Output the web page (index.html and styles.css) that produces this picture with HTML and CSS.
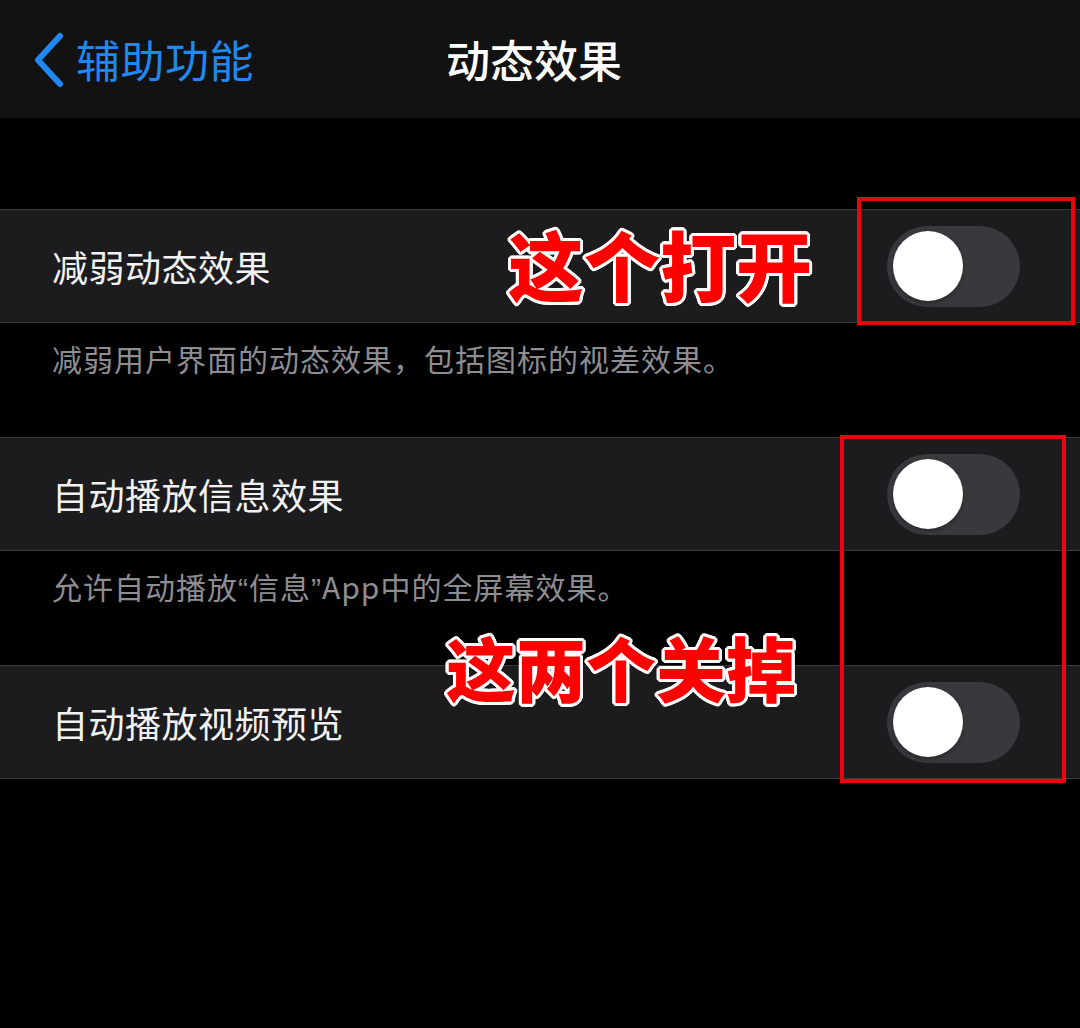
FILE: index.html
```html
<!DOCTYPE html>
<html lang="zh-CN">
<head>
<meta charset="utf-8">
<title>动态效果</title>
<link rel="stylesheet" href="styles.css">
</head>
<body>
<div class="screen">
  <header class="nav">
    <a class="back">
      <svg class="chev" width="34" height="56" viewBox="0 0 34 56"><polyline points="28,4 6,28 28,52" fill="none" stroke="#1f88f2" stroke-width="6" stroke-linecap="round" stroke-linejoin="round"/></svg>
      <span class="back-text">辅助功能</span>
    </a>
    <h1 class="title">动态效果</h1>
    <span class="nav-right"></span>
  </header>

  <div class="spacer"></div>

  <section class="group">
    <div class="row">
      <span class="label">减弱动态效果</span>
      <span class="toggle"><span class="knob"></span></span>
    </div>
  </section>
  <p class="footer">减弱用户界面的动态效果，包括图标的视差效果。</p>

  <section class="group">
    <div class="row">
      <span class="label">自动播放信息效果</span>
      <span class="toggle"><span class="knob"></span></span>
    </div>
  </section>
  <p class="footer">允许自动播放<span class="q">“</span>信息<span class="q">”</span>App中的全屏幕效果。</p>

  <section class="group">
    <div class="row">
      <span class="label">自动播放视频预览</span>
      <span class="toggle"><span class="knob"></span></span>
    </div>
  </section>

  <div class="mark mark-1"></div>
  <div class="mark mark-2"></div>
  <div class="note note-1">这个打开</div>
  <div class="note note-2">这两个关掉</div>
</div>
</body>
</html>
```

FILE: styles.css
```css
html, body {
  margin: 0;
  padding: 0;
  background: #000;
}
body {
  font-family: "Noto Sans CJK SC", "Noto Sans", sans-serif;
  width: 1080px;
  height: 1028px;
  overflow: hidden;
}
.screen {
  position: relative;
  width: 1080px;
  height: 1028px;
  background: #000;
}
.nav {
  height: 118px;
  background: #121212;
  display: grid;
  grid-template-columns: 1fr auto 1fr;
  align-items: center;
}
.back {
  display: flex;
  align-items: center;
  padding-left: 32px;
  color: #1f88f2;
}
.chev {
  display: block;
  margin-top: 2px;
}
.back-text {
  font-size: 44px;
  line-height: 1;
  margin-left: 10px;
  letter-spacing: 0.5px;
}
.title {
  margin: 0;
  font-size: 44px;
  font-weight: 500;
  color: #fff;
  line-height: 1;
  margin-right: 12px;
}
.spacer {
  height: 91px;
}
.group {
  background: #1c1c1e;
  border-top: 1px solid #38383a;
  border-bottom: 1px solid #38383a;
}
.row {
  height: 112px;
  display: flex;
  align-items: center;
  justify-content: space-between;
  padding-left: 52px;
  padding-right: 60px;
}
.label {
  font-size: 36px;
  color: #f2f2f2;
  line-height: 1;
  letter-spacing: 0.5px;
}
.toggle {
  width: 133px;
  height: 81px;
  border-radius: 41px;
  background: #39393d;
  display: flex;
  align-items: center;
  padding-left: 6px;
  box-sizing: border-box;
}
.knob {
  width: 70px;
  height: 70px;
  border-radius: 50%;
  background: #fff;
  box-shadow: 0 2px 4px rgba(0,0,0,0.3);
}
.footer {
  margin: 0;
  height: 114px;
  box-sizing: border-box;
  padding: 15px 0 0 52px;
  font-size: 30px;
  line-height: 40px;
  color: #8d8d92;
  letter-spacing: 1px;
}
.q {
  font-family: "Liberation Sans", sans-serif;
}
.mark {
  position: absolute;
  border: 4px solid #e8060c;
  box-sizing: border-box;
}
.mark-1 {
  left: 857px;
  top: 197px;
  width: 218px;
  height: 128px;
}
.mark-2 {
  left: 840px;
  top: 435px;
  width: 226px;
  height: 348px;
}
.note {
  position: absolute;
  font-weight: 900;
  color: #ff0000;
  line-height: 1;
  white-space: nowrap;
  text-shadow:
    3px 0 0 #fff, -3px 0 0 #fff, 0 3px 0 #fff, 0 -3px 0 #fff,
    2px 2px 0 #fff, -2px 2px 0 #fff, 2px -2px 0 #fff, -2px -2px 0 #fff,
    3px 1px 0 #fff, -3px 1px 0 #fff, 3px -1px 0 #fff, -3px -1px 0 #fff,
    1px 3px 0 #fff, -1px 3px 0 #fff, 1px -3px 0 #fff, -1px -3px 0 #fff;
}
.note-1 {
  left: 508px;
  top: 225px;
  font-size: 76px;
}
.note-2 {
  left: 446px;
  top: 632px;
  font-size: 70px;
}
```
